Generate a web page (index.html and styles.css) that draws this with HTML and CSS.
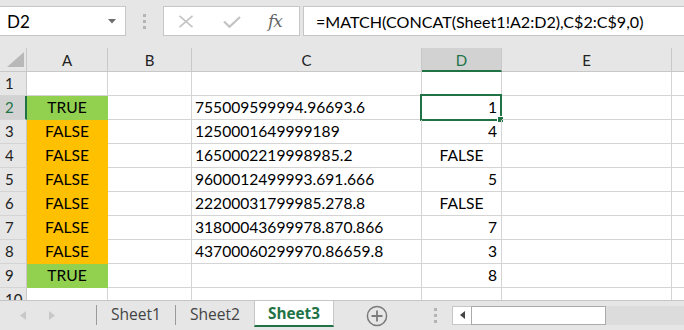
FILE: index.html
```html
<!DOCTYPE html>
<html>
<head>
<meta charset="utf-8">
<link rel="stylesheet" href="styles.css">
</head>
<body>
<div class="app">
  <div class="toolbar">
    <div class="namebox">
      <span class="name">D2</span>
      <svg class="dd" width="8" height="5" viewBox="0 0 8 5"><polygon points="0,0 8,0 4,4.5" fill="#6d6d6d"/></svg>
    </div>
    <div class="grip"><i></i><i></i><i></i></div>
    <div class="fxbox">
      <svg class="ico-x" width="16" height="13" viewBox="0 0 16 13"><path d="M1.5 0.8 L14.5 12.2 M14.5 0.8 L1.5 12.2" stroke="#c3c3c3" stroke-width="1.6" fill="none"/></svg>
      <svg class="ico-ok" width="18" height="12" viewBox="0 0 18 12"><path d="M1 5.5 L6.5 10.8 L17 1" stroke="#c3c3c3" stroke-width="2.2" fill="none"/></svg>
      <span class="fx">fx</span>
    </div>
    <div class="formula">=MATCH(CONCAT(Sheet1!A2:D2),C$2:C$9,0)</div>
  </div>

  <div class="sheet">
    <div class="c hd corner"><svg width="17" height="15" viewBox="0 0 17 15"><polygon points="17,0 17,15 0,15" fill="#b8b8b8"/></svg></div>
    <div class="c hd ch">A</div>
    <div class="c hd ch">B</div>
    <div class="c hd ch">C</div>
    <div class="c hd ch act">D</div>
    <div class="c hd ch">E</div>
    <div class="c hd ch last"></div>

    <div class="c hd rh">1</div>
    <div class="c"></div><div class="c"></div><div class="c"></div><div class="c"></div><div class="c"></div><div class="c last"></div>

    <div class="c hd rh ract">2</div>
    <div class="c ctr green">TRUE</div><div class="c"></div><div class="c txt">755009599994.96693.6</div><div class="c num sel">1<div class="selbox"><b class="handle"></b></div></div><div class="c"></div><div class="c last"></div>

    <div class="c hd rh">3</div>
    <div class="c ctr orange">FALSE</div><div class="c"></div><div class="c txt">1250001649999189</div><div class="c num">4</div><div class="c"></div><div class="c last"></div>

    <div class="c hd rh">4</div>
    <div class="c ctr orange">FALSE</div><div class="c"></div><div class="c txt">1650002219998985.2</div><div class="c ctr">FALSE</div><div class="c"></div><div class="c last"></div>

    <div class="c hd rh">5</div>
    <div class="c ctr orange">FALSE</div><div class="c"></div><div class="c txt">9600012499993.691.666</div><div class="c num">5</div><div class="c"></div><div class="c last"></div>

    <div class="c hd rh">6</div>
    <div class="c ctr orange">FALSE</div><div class="c"></div><div class="c txt">22200031799985.278.8</div><div class="c ctr">FALSE</div><div class="c"></div><div class="c last"></div>

    <div class="c hd rh">7</div>
    <div class="c ctr orange">FALSE</div><div class="c"></div><div class="c txt">31800043699978.870.866</div><div class="c num">7</div><div class="c"></div><div class="c last"></div>

    <div class="c hd rh">8</div>
    <div class="c ctr orange">FALSE</div><div class="c"></div><div class="c txt">43700060299970.86659.8</div><div class="c num">3</div><div class="c"></div><div class="c last"></div>

    <div class="c hd rh">9</div>
    <div class="c ctr green">TRUE</div><div class="c"></div><div class="c txt"></div><div class="c num">8</div><div class="c"></div><div class="c last"></div>

    <div class="c hd rh">10</div>
    <div class="c"></div><div class="c"></div><div class="c"></div><div class="c"></div><div class="c"></div><div class="c last"></div>
  </div>

  <div class="tabs">
    <div class="nav">
      <svg width="6" height="9" viewBox="0 0 6 9"><polygon points="6,0 6,9 0,4.5" fill="#c8c8c8"/></svg>
      <svg width="6" height="9" viewBox="0 0 6 9"><polygon points="0,0 0,9 6,4.5" fill="#c8c8c8"/></svg>
    </div>
    <div class="sep"></div>
    <div class="tab">Sheet1</div>
    <div class="sep"></div>
    <div class="tab">Sheet2</div>
    <div class="tab active">Sheet3</div>
    <div class="add">
      <svg width="22" height="22" viewBox="0 0 22 22"><circle cx="11" cy="11" r="9.6" stroke="#7a7a7a" stroke-width="1.5" fill="none"/><path d="M11 5.5 V16.5 M5.5 11 H16.5" stroke="#7a7a7a" stroke-width="1.8"/></svg>
    </div>
    <div class="grip2"><i></i><i></i><i></i></div>
    <div class="hscroll">
      <div class="larrow"><svg width="5" height="8" viewBox="0 0 5 8"><polygon points="5,0 5,8 0,4" fill="#444"/></svg></div>
      <div class="thumb"></div>
      <div class="track"></div>
    </div>
  </div>
</div>
</body>
</html>
```

FILE: styles.css
```css
* { box-sizing: border-box; }
html, body { margin: 0; padding: 0; }
body {
  width: 684px;
  height: 330px;
  overflow: hidden;
  background: #e6e6e6;
  font-family: Lato, "Liberation Sans", sans-serif;
}
.app {
  width: 684px;
  height: 330px;
  display: flex;
  flex-direction: column;
  overflow: hidden;
}

/* toolbar */
.toolbar {
  height: 48px;
  flex: none;
  display: flex;
  align-items: flex-start;
  padding-top: 6px;
  background: #e6e6e6;
}
.namebox {
  width: 126px;
  height: 30px;
  background: #fff;
  border: 1px solid #c6c6c6;
  border-left: none;
  display: flex;
  align-items: center;
  justify-content: space-between;
  padding: 0 9px 0 7px;
  font-size: 17px;
  color: #000;
}
.namebox .dd { margin-top: 1px; }
.grip {
  width: 37px;
  height: 30px;
  display: flex;
  flex-direction: column;
  align-items: center;
  justify-content: center;
  gap: 3px;
}
.grip i, .grip2 i {
  display: block;
  width: 3px;
  height: 3px;
  background: #b4b4b4;
}
.fxbox {
  width: 137px;
  height: 30px;
  background: #fff;
  border: 1px solid #c6c6c6;
  display: flex;
  align-items: center;
  padding-left: 14px;
}
.ico-x { margin-right: 29px; }
.ico-ok { margin-right: 27px; margin-top: 2px; }
.fx {
  font-family: "DejaVu Serif", "Liberation Serif", serif;
  font-style: italic;
  font-size: 17px;
  color: #666;
  letter-spacing: -1px;
}
.formula {
  flex: 1;
  height: 30px;
  margin-left: 3px;
  background: #fff;
  border: 1px solid #c6c6c6;
  border-right: none;
  display: flex;
  align-items: center;
  padding-left: 12px;
  font-size: 16.1px;
  color: #000;
  white-space: nowrap;
  overflow: hidden;
}

/* sheet grid */
.sheet {
  height: 252px;
  flex: none;
  display: grid;
  grid-template-columns: 27px 81px 84px 230px 80px 170px 1fr;
  grid-auto-rows: 24px;
  background: #fff;
  overflow: hidden;
}
.c {
  border-right: 1px solid #d4d4d4;
  border-bottom: 1px solid #d4d4d4;
  font-size: 15.6px;
  line-height: 23px;
  color: #000;
  white-space: nowrap;
  overflow: visible;
  position: relative;
}
.c.last { border-right: none; }
.txt { padding-left: 3px; }
.num { text-align: right; padding-right: 4px; }
.ctr { text-align: center; }
.green { background: #92d050; border-color: #92d050; }
.orange { background: #ffc000; border-color: #ffc000; }

.hd {
  background: #e6e6e6;
  border-color: #c8c8c8;
  color: #222;
  font-size: 15px;
}
.ch { text-align: center; line-height: 24px; }
.ch.last { border-right: none; }
.ch.act {
  background: #d2d2d2;
  color: #217346;
  border-bottom: 2px solid #217346;
}
.rh {
  padding-left: 5px;
  border-bottom-color: #d4d4d4;
  border-right-color: #c8c8c8;
}
.rh.ract {
  background: #d2d2d2;
  color: #217346;
  border-right: 2px solid #217346;
}
.corner {
  display: flex;
  align-items: flex-end;
  padding: 0 0 4px 7px;
}
.corner svg { display: block; }

.selbox {
  position: absolute;
  left: -2px;
  top: -2px;
  right: -1px;
  bottom: -2px;
  border: 2px solid #217346;
  pointer-events: none;
}
.handle {
  position: absolute;
  right: -4px;
  bottom: -4px;
  width: 7px;
  height: 7px;
  background: #217346;
  border: 1px solid #fff;
}

/* tabs */
.tabs {
  flex: 1;
  display: flex;
  align-items: stretch;
  border-top: 1px solid #c6c6c6;
  background: #e6e6e6;
  height: 30px;
}
.nav {
  width: 96px;
  display: flex;
  align-items: center;
  padding-left: 20px;
  gap: 23px;
}
.sep {
  width: 1px;
  height: 20px;
  align-self: center;
  margin-top: -2px;
  background: #9a9a9a;
}
.tab {
  width: 78px;
  text-align: center;
  font-family: "Open Sans", "Noto Sans", sans-serif;
  font-size: 15.6px;
  line-height: 26px;
  color: #444;
  height: 26px;
}
.tab.active {
  width: 80px;
  background: #fff;
  border-left: 1px solid #c6c6c6;
  border-right: 1px solid #c6c6c6;
  border-bottom: 2px solid #217346;
  color: #217346;
  font-weight: 700;
  line-height: 24px;
  font-size: 15.3px;
}
.add {
  width: 86px;
  display: flex;
  align-items: center;
  justify-content: center;
}
.add svg { display: block; }
.grip2 {
  width: 30px;
  display: flex;
  flex-direction: column;
  align-items: center;
  justify-content: center;
  gap: 3px;
}
.hscroll {
  flex: 1;
  display: flex;
  align-items: center;
  height: 19px;
  align-self: center;
  margin-top: -1px;
  margin-left: 2px;
}
.larrow {
  width: 19px;
  height: 19px;
  background: #fff;
  border: 1px solid #c6c6c6;
  border-right: none;
  display: flex;
  align-items: center;
  justify-content: center;
}
.larrow svg { display: block; }
.thumb {
  width: 135px;
  height: 19px;
  background: #fff;
  border: 1px solid #ababab;
}
.track {
  flex: 1;
  height: 19px;
  background: #dcdcdc;
}
```
